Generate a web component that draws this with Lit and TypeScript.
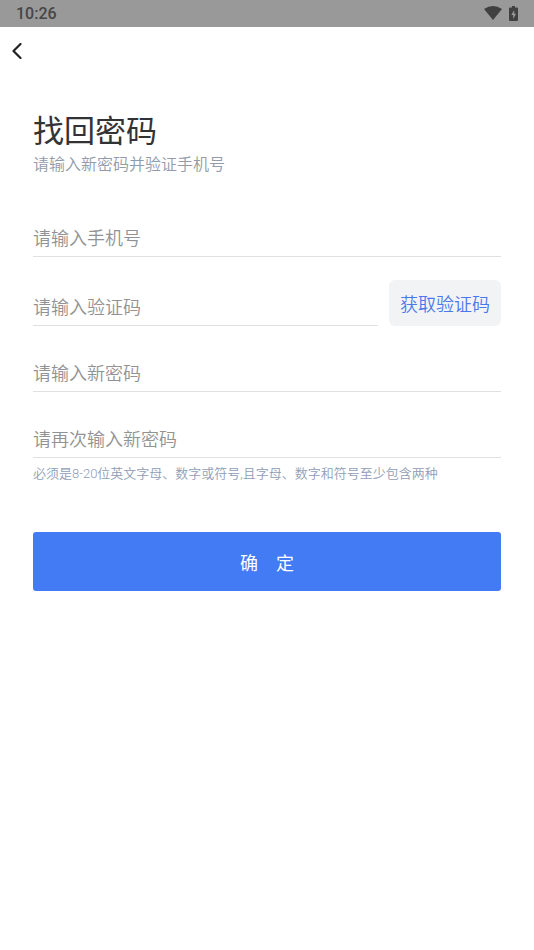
import { LitElement, html, css } from "lit";
import { customElement } from "lit/decorators.js";

@customElement("app-root")
export class AppRoot extends LitElement {
  static styles = css`
    :host {
      display: block;
      min-height: 100vh;
      background: #fff;
      color: #333;
      font-family: Roboto, "Noto Sans CJK SC", sans-serif;
      font-weight: 350;
    }
    * {
      box-sizing: border-box;
    }
    .status {
      display: flex;
      align-items: center;
      justify-content: space-between;
      height: 27px;
      padding: 0 16px;
      background: #999;
      color: #464646;
      font-size: 16px;
      line-height: 27px;
      font-weight: 500;
    }
    .icons {
      display: flex;
      align-items: center;
      gap: 7px;
      padding-bottom: 1px;
    }
    .icons svg,
    .back svg {
      display: block;
    }
    .nav {
      display: flex;
      align-items: center;
      height: 48px;
      padding: 0 8px;
    }
    .back {
      padding: 4px;
      border: 0;
      background: none;
    }
    .page {
      padding: 34px 33px;
    }
    h1 {
      margin: 0;
      font-size: 31px;
      line-height: 46px;
      font-weight: 400;
    }
    .sub {
      margin: 0 0 42px;
      font-size: 16px;
      line-height: 20px;
      color: #929ba8;
    }
    form {
      display: flex;
      flex-direction: column;
    }
    .field {
      display: block;
      width: 100%;
      height: 40px;
      margin: 0 0 26px;
      padding: 3px 0 0;
      border: 0;
      border-bottom: 1px solid #dfe0e1;
      border-radius: 0;
      outline: none;
      background: none;
      color: #333;
      font: inherit;
      font-size: 18px;
    }
    .field::placeholder {
      color: #929292;
      opacity: 1;
    }
    .row {
      display: flex;
      align-items: flex-end;
      gap: 11px;
      margin: -3px 0 26px;
    }
    .row .field {
      flex: 1;
      min-width: 0;
      margin: 0;
    }
    .code {
      height: 46px;
      padding: 0 11px;
      border: 0;
      border-radius: 6px;
      background: #f2f3f5;
      color: #4a78ec;
      font: inherit;
      font-size: 18px;
    }
    .last {
      margin: 0;
    }
    .hint {
      margin: 4px 0 46px;
      font-size: 13px;
      line-height: 24px;
      color: #8f9db5;
    }
    .submit {
      height: 59px;
      border: 0;
      border-radius: 3px;
      background: #437bf5;
      color: #fff;
      font: inherit;
      font-size: 18px;
      font-weight: 400;
    }
  `;

  render() {
    return html`
      <div class="status">
        <span>10:26</span>
        <span class="icons">
          <svg width="18" height="14" viewBox="0 0 18 14" aria-hidden="true">
            <path d="M0 3Q9-3 18 3L9 14Z" fill="#404040" />
          </svg>
          <svg width="9" height="15" viewBox="0 0 9 15" aria-hidden="true">
            <path d="M3 0h3v1.500h2q1 0 1 1V14q0 1-1 1H1q-1 0-1-1V2.500q0-1 1-1h2z" fill="#404040" />
            <path d="M5.200 4L2.300 9h1.900v4L7 7.800H5.200z" fill="#999" />
          </svg>
        </span>
      </div>
      <nav class="nav">
        <button class="back" type="button" aria-label="返回">
          <svg width="10" height="16" viewBox="0 0 10 16" fill="none">
            <path d="M8.500 1L1.500 8l7 7" stroke="#222" stroke-width="2.200" stroke-linecap="round" stroke-linejoin="round" />
          </svg>
        </button>
      </nav>
      <main class="page">
        <h1>找回密码</h1>
        <p class="sub">请输入新密码并验证手机号</p>
        <form @submit=${(e: Event) => e.preventDefault()}>
          <input class="field" type="tel" placeholder="请输入手机号" aria-label="手机号" />
          <div class="row">
            <input class="field" type="text" placeholder="请输入验证码" aria-label="验证码" />
            <button class="code" type="button">获取验证码</button>
          </div>
          <input class="field" type="password" placeholder="请输入新密码" aria-label="新密码" />
          <input class="field last" type="password" placeholder="请再次输入新密码" aria-label="再次输入新密码" aria-describedby="hint" />
          <p class="hint" id="hint">必须是8-20位英文字母、数字或符号,且字母、数字和符号至少包含两种</p>
          <button class="submit" type="submit">确　定</button>
        </form>
      </main>
    `;
  }
}
